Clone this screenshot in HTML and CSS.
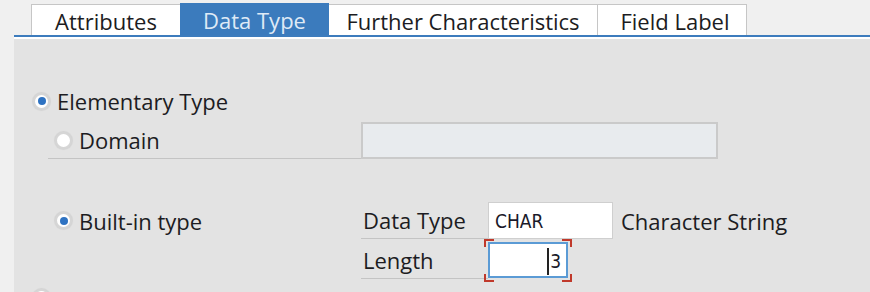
FILE: index.html
```html
<html>
<head>
<title>Data Element - Data Type</title>
<link rel="stylesheet" href="styles.css">
</head>
<body>
<div class="tabbar">
	<div class="tab tabAttr">Attributes</div>
	<div class="tab tabData active">Data Type</div>
	<div class="tab tabFurther">Further Characteristics</div>
	<div class="tab tabLabel">Field Label</div>
</div>
<div class="panel">
	<div class="row">
		<div class="choice top">
			<span class="radio on"></span>
			<span>Elementary Type</span>
		</div>
	</div>
	<div class="row">
		<div class="choice sub underline">
			<span class="radio"></span>
			<span>Domain</span>
		</div>
		<div class="box disabled wide"></div>
	</div>
	<div class="row"></div>
	<div class="row">
		<div class="choice sub">
			<span class="radio on"></span>
			<span>Built-in type</span>
		</div>
		<div class="caption underline">Data Type</div>
		<div class="box value">CHAR</div>
		<div class="desc">Character String</div>
	</div>
	<div class="row">
		<div class="choice sub"></div>
		<div class="caption underline">Length</div>
		<div class="focus">
			<div class="box value num"><span class="caret"></span>3</div>
		</div>
	</div>
	<div class="row last">
		<div class="choice top">
			<span class="radio"></span>
		</div>
	</div>
</div>
</body>
</html>
```
FILE: styles.css
```css
body
{
	margin:0px;
	width:870px;
	height:292px;
	overflow:hidden;
	background:#f0f0f0;
	font-family:"Open Sans", "Noto Sans", sans-serif;
	font-size:22px;
	color:#1c1c22;
}
.tabbar
{
	display:flex;
	margin-left:14px;
	padding-left:17px;
	padding-top:4px;
	height:31px;
	border-bottom:2px solid #3d7cbd;
}
.tab
{
	display:flex;
	align-items:center;
	justify-content:center;
	background:#ffffff;
	border:1px solid #c6c6c6;
	border-bottom:none;
	margin-right:-1px;
	line-height:1;
	padding-top:1px;
}
.tabAttr { width:148px; }
.tabData { width:147px; }
.tabFurther { width:268px; }
.tabLabel { width:150px; padding-left:6px; box-sizing:border-box; }
.tab.active
{
	background:#3b7bbd;
	border-color:#3b7bbd;
	color:#dfeaf6;
	margin-top:-1px;
	position:relative;
	z-index:1;
}
.panel
{
	margin-left:14px;
	border-top:2px solid #ffffff;
	background:#e3e3e3;
	box-sizing:border-box;
	height:255px;
	padding-top:42px;
	overflow:hidden;
}
.row
{
	display:flex;
	align-items:stretch;
	height:40px;
}
.row.last
{
	height:13px;
	align-items:flex-start;
}
.row.last .choice
{
	padding-top:8px;
}
.choice
{
	display:flex;
	align-items:center;
	gap:7px;
	box-sizing:border-box;
}
.choice.top
{
	padding-left:19px;
}
.choice.sub
{
	margin-left:34px;
	padding-left:7px;
	width:313px;
	height:37px;
	margin-top:1px;
}
.underline
{
	border-bottom:1px solid #c4c4c4;
}
.radio
{
	flex:none;
	width:13px;
	height:13px;
	border-radius:50%;
	background:#ffffff;
	border:2px solid #d6d6d6;
	box-shadow:0 0 1px 1px rgba(0,0,0,0.07);
	display:flex;
	align-items:center;
	justify-content:center;
}
.radio.on::after
{
	content:"";
	width:8px;
	height:8px;
	border-radius:50%;
	background:#2f73c2;
}
.box
{
	box-sizing:border-box;
	height:37px;
	margin-top:1px;
	border:1px solid #cfcfcf;
	background:#ffffff;
}
.box.disabled
{
	background:#e8ebee;
	border:2px solid #cacaca;
}
.box.wide
{
	width:357px;
}
.caption
{
	box-sizing:border-box;
	width:127px;
	height:37px;
	margin-top:1px;
	padding-left:2px;
	display:flex;
	align-items:center;
}
.box.value
{
	width:125px;
	display:flex;
	align-items:center;
	padding-left:6px;
	font-family:"DejaVu Sans Condensed", "Liberation Sans", sans-serif;
	font-stretch:condensed;
	font-size:19px;
	color:#1a1a2a;
}
.desc
{
	margin-left:8px;
	display:flex;
	align-items:center;
	height:37px;
	margin-top:1px;
}
.focus
{
	position:relative;
	margin-top:1px;
	height:36px;
}
.focus::before
{
	content:"";
	position:absolute;
	left:-4px;
	top:-3px;
	right:-4px;
	bottom:-4px;
	background:
		linear-gradient(#c0392b,#c0392b) left top / 10px 2px no-repeat,
		linear-gradient(#c0392b,#c0392b) left top / 2px 8px no-repeat,
		linear-gradient(#c0392b,#c0392b) right top / 10px 2px no-repeat,
		linear-gradient(#c0392b,#c0392b) right top / 2px 8px no-repeat,
		linear-gradient(#c0392b,#c0392b) left bottom / 10px 2px no-repeat,
		linear-gradient(#c0392b,#c0392b) left bottom / 2px 8px no-repeat,
		linear-gradient(#c0392b,#c0392b) right bottom / 10px 2px no-repeat,
		linear-gradient(#c0392b,#c0392b) right bottom / 2px 8px no-repeat;
}
.box.num
{
	width:80px;
	height:36px;
	margin-top:0px;
	border:2px solid #5b9bd5;
	justify-content:flex-end;
	padding-right:5px;
	padding-top:2px;
	font-size:19px;
}
.caret
{
	display:inline-block;
	width:2px;
	height:27px;
	background:#222222;
	margin-right:1px;
}
```
